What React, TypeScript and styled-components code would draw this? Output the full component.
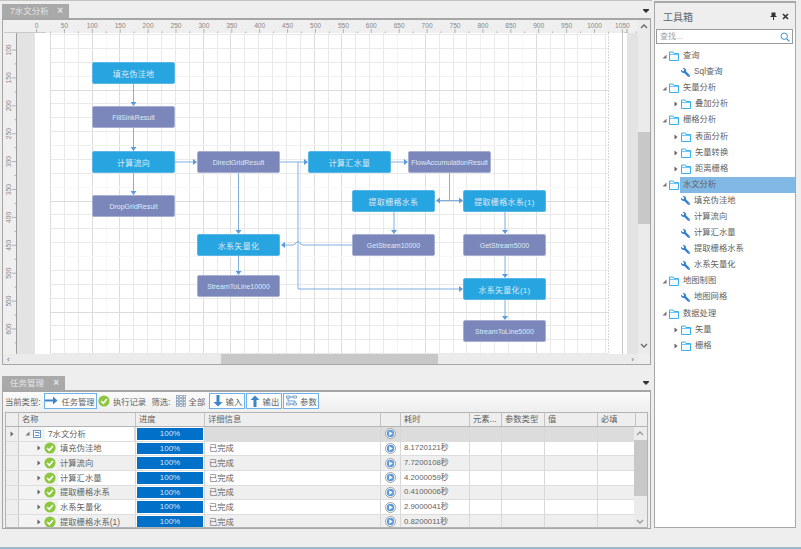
import React from "react";
import styled, { createGlobalStyle } from "styled-components";
import { FaWrench } from "react-icons/fa";

const FONT = `"Liberation Sans", "Noto Sans CJK SC", sans-serif`;

const GlobalStyle = createGlobalStyle`
  html, body { margin: 0; padding: 0; background: #eeeeee; }
  * { box-sizing: border-box; }
`;

const Page = styled.div`
  width: 801px;
  height: 549px;
  display: flex;
  flex-direction: column;
  overflow: hidden;
  background: #eeeeee;
  font-family: ${FONT};
  color: #626262;
`;

const Body = styled.div`
  flex: 1;
  display: flex;
  min-height: 0;
`;

const StatusStrip = styled.div`
  height: 2px;
  background: #9cb8cc;
`;

const LeftColumn = styled.div`
  width: 652px;
  padding-left: 2px;
  display: flex;
  flex-direction: column;
  border-top: 1px solid #c4c4c4;
`;

/* tab strips */
const TabStrip = styled.div<{ $h: number }>`
  height: ${(p) => p.$h}px;
  display: flex;
  align-items: flex-end;
  justify-content: space-between;
  padding-right: 3px;
`;

const Tab = styled.div<{ $w: number }>`
  width: ${(p) => p.$w}px;
  height: 14px;
  background: #a9a9a9;
  color: #e4e4e4;
  font-size: 8.5px;
  line-height: 14px;
  padding: 0 6px 0 8px;
  display: flex;
  justify-content: space-between;
`;

const TabClose = styled.span`
  font-size: 10px;
  font-weight: bold;
`;

const DropCaret = styled.span`
  width: 0;
  height: 0;
  margin-bottom: 5px;
  border-left: 3px solid transparent;
  border-right: 3px solid transparent;
  border-top: 3px solid #333;
  box-shadow: 0 -1px 0 #333;
`;

/* drawing panel */
const DocPanel = styled.div`
  height: 347px;
  width: 649px;
  border: 1px solid #a6a6a6;
  border-top-width: 2px;
  border-bottom-width: 1px;
  display: flex;
  background: #eeeeee;
`;

const DrawingColumn = styled.div`
  width: 635px;
  display: flex;
  flex-direction: column;
`;

const TopRuler = styled.svg`
  display: block;
  flex: none;
  background: #efefef;
`;

const CanvasRow = styled.div`
  height: 321px;
  display: flex;
`;

const SideRuler = styled.svg`
  display: block;
  flex: none;
  background: #efefef;
`;

const Gutter = styled.div<{ $w: number }>`
  width: ${(p) => p.$w}px;
  background: #e3e3e3;
`;

const Paper = styled.div`
  position: relative;
  width: 592px;
  height: 321px;
  background: #fff;
  overflow: hidden;
`;

const PaperArt = styled.svg`
  position: absolute;
  left: 0;
  top: 0;
`;

const FlowNode = styled.div<{ $x: number; $y: number; $kind: "task" | "result"; $h: number }>`
  position: absolute;
  left: ${(p) => p.$x - 35}px;
  top: ${(p) => p.$y - 33}px;
  width: 83px;
  height: ${(p) => p.$h}px;
  border-radius: 2px;
  border: 1px solid ${(p) => (p.$kind === "task" ? "#5ab6e4" : "#a8b0d2")};
  background: ${(p) => (p.$kind === "task" ? "#26a5e0" : "#7b86bb")};
  color: #dcebf6;
  font-size: ${(p) => (p.$kind === "task" ? 8 : 7)}px;
  letter-spacing: ${(p) => (p.$kind === "task" ? "0.3px" : "0")};
  display: flex;
  align-items: center;
  justify-content: center;
  white-space: nowrap;
`;

const HScroll = styled.div`
  height: 10px;
  background: #ebebeb;
  display: flex;
  align-items: center;
  justify-content: space-between;
  padding: 0 4px;
  position: relative;
  color: #666;
  font-size: 8px;
`;

const HThumb = styled.div`
  position: absolute;
  left: 218px;
  top: 0;
  width: 217px;
  height: 10px;
  background: #c8c8c8;
`;

const VScroll = styled.div`
  width: 12px;
  height: 334px;
  background: #ebebeb;
  position: relative;
`;

const VThumb = styled.div<{ $top: number; $h: number }>`
  position: absolute;
  left: 0;
  right: 0;
  top: ${(p) => p.$top}px;
  height: ${(p) => p.$h}px;
  background: #c8c8c8;
`;

const ScrollChevron = styled.svg<{ $top: number }>`
  position: absolute;
  left: 2px;
  top: ${(p) => p.$top}px;
`;

/* task panel */
const TaskPanel = styled.div`
  width: 649px;
  height: 139px;
  border: 1px solid #a6a6a6;
  border-top-width: 2px;
  background: #eeeeee;
  display: flex;
  flex-direction: column;
`;

const Toolbar = styled.div`
  height: 20px;
  flex: none;
  display: flex;
  align-items: center;
  padding: 0 0 3px 2px;
  font-size: 8.3px;
  background: linear-gradient(#fbfbfb, #eeeeee);
  white-space: nowrap;
`;

const ToolLabel = styled.span<{ $ml?: number }>`
  margin-left: ${(p) => p.$ml ?? 0}px;
`;

const ToolButton = styled.div<{ $w: number; $ml?: number; $boxed?: boolean }>`
  width: ${(p) => p.$w}px;
  height: 16px;
  margin-left: ${(p) => p.$ml ?? 0}px;
  display: flex;
  align-items: center;
  justify-content: center;
  gap: 3px;
  border: 1px solid ${(p) => (p.$boxed ? "#6fb0ea" : "transparent")};
  background: ${(p) => (p.$boxed ? "#fbfdff" : "transparent")};
`;

const Table = styled.div`
  width: 643px;
  height: 116px;
  margin-left: 2px;
  border: 1px solid #b4b4b4;
  overflow: hidden;
  position: relative;
  background: #fff;
`;

const HeadRow = styled.div`
  height: 14px;
  display: flex;
  background: #eeeeee;
  border-bottom: 1px solid #b4b4b4;
  font-size: 8.3px;
  line-height: 13px;
`;

const HeadCell = styled.div<{ $w: number }>`
  width: ${(p) => p.$w}px;
  flex: none;
  padding-left: 3px;
  border-right: 1px solid #c4c4c4;
  overflow: hidden;
  white-space: nowrap;
`;

const Row = styled.div<{ $tone: "root" | "plain" | "alt" }>`
  height: 14.67px;
  display: flex;
  font-size: 8.3px;
  line-height: 14px;
  background: ${(p) => (p.$tone === "root" ? "#dcdcdc" : p.$tone === "alt" ? "#efefef" : "#fff")};
  border-bottom: 1px solid #dddddd;
`;

const Cell = styled.div<{ $w: number }>`
  width: ${(p) => p.$w}px;
  flex: none;
  padding-left: 3px;
  border-right: 1px solid #d8d8d8;
  white-space: nowrap;
  overflow: hidden;
  display: flex;
  align-items: center;
`;

const TimeCell = styled(Cell)`
  font-size: 7.8px;
`;

const MarkerCell = styled.div`
  width: 13px;
  flex: none;
  background: #eeeeee;
  border-right: 1px solid #c8c8c8;
  display: flex;
  align-items: center;
  justify-content: center;
`;

const NameCell = styled.div<{ $root?: boolean }>`
  width: 117px;
  flex: none;
  display: flex;
  align-items: center;
  white-space: nowrap;
  border-right: 1px solid #d8d8d8;
  padding-left: ${(p) => (p.$root ? 6 : 18)}px;
  gap: 3px;
  background: linear-gradient(
    to right,
    #f3f3f3 ${(p) => (p.$root ? 26 : 39)}px,
    transparent ${(p) => (p.$root ? 26 : 39)}px
  );
`;

const NameText = styled.span`
  margin-left: 1px;
`;

const RootName = styled(NameText)`
  background: #fff;
  padding-left: 3px;
  width: 89px;
`;

const ProgressCell = styled.div`
  width: 69px;
  flex: none;
  padding: 1px;
  background: #fff;
  border-right: 1px solid #d8d8d8;
`;

const ProgressBar = styled.div`
  height: 100%;
  background: #0070c8;
  color: #cfe6f8;
  font-size: 8px;
  line-height: 12px;
  text-align: center;
`;

const DetailCell = styled(Cell)`
  padding-left: 4px;
`;

const PlayCell = styled.div`
  width: 20px;
  flex: none;
  display: flex;
  align-items: center;
  justify-content: center;
  border-right: 1px solid #d8d8d8;
`;

const TableScroll = styled.div`
  position: absolute;
  right: 0;
  top: 14px;
  bottom: 0;
  width: 13px;
  background: #ebebeb;
`;

/* toolbox panel */
const ToolboxPanel = styled.div`
  width: 142px;
  height: 527px;
  margin: 1px 0 0 2px;
  border: 1px solid #a8a8a8;
  border-width: 2px 1px 1px 1px;
  background: #fff;
  display: flex;
  flex-direction: column;
`;

const ToolboxHead = styled.div`
  height: 26px;
  background: #eeeeee;
  display: flex;
  align-items: center;
  padding: 0 6px 0 8px;
  font-size: 10px;
`;

const ToolboxTitle = styled.span`
  flex: 1;
`;

const HeadIcons = styled.div`
  display: flex;
  align-items: center;
  gap: 5px;
`;

const SearchBox = styled.div`
  height: 15px;
  margin: 0 2px 0 1px;
  border: 1px solid #9a9a9a;
  background: #fff;
  color: #a4a4a4;
  font-size: 8px;
  line-height: 12px;
  padding: 0 2px 0 3px;
  display: flex;
  align-items: center;
  justify-content: space-between;
`;

const TreeList = styled.div`
  margin-top: 4px;
`;

const TreeRow = styled.div<{ $indent: number }>`
  height: 16.1px;
  display: flex;
  align-items: center;
  padding-left: ${(p) => p.$indent}px;
  font-size: 8.3px;
  white-space: nowrap;
`;

const TreeIconSlot = styled.span`
  width: 7px;
  flex: none;
  display: flex;
  align-items: center;
  justify-content: flex-start;
`;

const TreeLabel = styled.span<{ $selected?: boolean }>`
  flex: ${(p) => (p.$selected ? 1 : "none")};
  margin-left: ${(p) => (p.$selected ? 1 : 4)}px;
  padding-left: ${(p) => (p.$selected ? 3 : 0)}px;
  height: 16px;
  line-height: 15px;
  background: ${(p) => (p.$selected ? "#82b8e4" : "transparent")};
`;

const ToolIcon = styled(FaWrench)`
  flex: none;
  width: 9px;
  height: 9px;
  color: #2f7fd8;
  transform: scaleX(-1);
`;

/* drawings */
const Collapsed = () => (
  <svg width="4" height="6" viewBox="0 0 4 6">
    <path d="M0.5 0.5 L3.5 3 L0.5 5.5 Z" fill="#666" />
  </svg>
);

const Expanded = () => (
  <svg width="5" height="5" viewBox="0 0 5 5">
    <path d="M4.5 0.5 V4.5 H0.5 Z" fill="#777" />
  </svg>
);

const FolderIcon = () => (
  <svg width="10" height="10" viewBox="0 0 10 10" style={{ flex: "none" }}>
    <path d="M0.5 9.5 V1 H4 L5 2.5 H9.5 V9.5 Z" fill="#f4fbff" stroke="#38b0f0" />
    <path d="M0.5 3.5 H9.5" stroke="#38b0f0" strokeWidth="0.7" />
  </svg>
);

const CheckIcon = () => (
  <svg width="12" height="12" viewBox="0 0 12 12" style={{ flex: "none" }}>
    <circle cx="6" cy="6" r="5.6" fill="#8dc63f" />
    <path d="M3.2 6 L5.3 8.2 L8.9 4" fill="none" stroke="#fff" strokeWidth="1.6" />
  </svg>
);

const PlayIcon = () => (
  <svg width="11" height="11" viewBox="0 0 11 11">
    <circle cx="5.5" cy="5.5" r="5" fill="#fff" stroke="#8a8a8a" strokeWidth="0.8" />
    <circle cx="5.5" cy="5.5" r="3.7" fill="#5a9ad8" />
    <path d="M4.2 3.3 L7.8 5.5 L4.2 7.7 Z" fill="#fff" />
  </svg>
);

const DocIcon = () => (
  <svg width="8" height="8" viewBox="0 0 8 8" style={{ flex: "none" }}>
    <rect x="0.5" y="0.5" width="7" height="7" fill="#fff" stroke="#6a94c4" />
    <path d="M2 5.5 H6 M2 2.5 H6 V4" stroke="#6a94c4" fill="none" />
  </svg>
);

const ArrowRight = () => (
  <svg width="13" height="9" viewBox="0 0 13 9">
    <path d="M0 3.5 H8 V0.5 L12.5 4.5 L8 8.5 V5.5 H0 Z" fill="#3d85c8" />
  </svg>
);

const ArrowVert = ({ up }: { up?: boolean }) => (
  <svg width="10" height="12" viewBox="0 0 10 12" style={{ transform: up ? "rotate(180deg)" : undefined }}>
    <path d="M3.5 0 H6.5 V7 H9.5 L5 11.5 L0.5 7 H3.5 Z" fill="#3d85c8" />
  </svg>
);

const GridGlyph = () => (
  <svg width="10" height="12" viewBox="0 0 10 12">
    {[0, 1, 2, 3].map((r) =>
      [0, 1, 2].map((c) => (
        <rect key={`${r}-${c}`} x={c * 3.5 + 0.2} y={r * 3 + 0.2} width="2.4" height="2.2" fill="#fff" stroke="#5f7f9f" strokeWidth="0.6" />
      ))
    )}
  </svg>
);

const ParamGlyph = () => (
  <svg width="11" height="12" viewBox="0 0 11 12">
    <path d="M0.5 1 H4 V3 H0.5 Z M7 1 H10.5 V3 H7 Z M0.5 8 H4 V10 H0.5 Z M7 8 H10.5 V10 H7 Z" fill="none" stroke="#6a8fb4" strokeWidth="0.8" />
    <path d="M4 2 H7 M4 9 H7 M2 3 V6 H9 V8" fill="none" stroke="#3d85c8" strokeWidth="0.8" />
  </svg>
);

const PinIcon = () => (
  <svg width="7" height="8" viewBox="0 0 7 8">
    <path d="M1.5 0.5 H5.5 V4 H6.5 V5 H4 V8 H3 V5 H0.5 V4 H1.5 Z" fill="#333" />
  </svg>
);

const CloseIcon = () => (
  <svg width="7" height="7" viewBox="0 0 7 7">
    <path d="M1 1 L6 6 M6 1 L1 6" stroke="#333" strokeWidth="1.6" />
  </svg>
);

const SearchIcon = () => (
  <svg width="10" height="10" viewBox="0 0 10 10">
    <circle cx="4.2" cy="4.2" r="3.2" fill="none" stroke="#3e8fd0" />
    <path d="M6.6 6.6 L9.4 9.4" stroke="#3e8fd0" strokeWidth="1.3" />
  </svg>
);

const Chevron = ({ up, top, color = "#666" }: { up?: boolean; top: number; color?: string }) => (
  <ScrollChevron $top={top} width="8" height="6" viewBox="0 0 8 6">
    <path d={up ? "M1 5 L4 2 L7 5" : "M1 1 L4 4 L7 1"} fill="none" stroke={color} strokeWidth="1.3" />
  </ScrollChevron>
);

/* rulers: 50 units = 27.9px */
const UNIT = 27.9;
const topMarks = Array.from({ length: 23 }, (_, i) => i * 50);
const sideMarks = [100, 150, 200, 250, 300, 350, 400, 450, 500, 550, 600];

const RulerTop = () => (
  <TopRuler width="635" height="13" viewBox="3 20 635 13">
    {topMarks.map((m, i) => {
      const x = 36.5 + i * UNIT;
      return (
        <g key={m}>
          {x < 624 && (
            <text x={x} y="28" fontSize="6.6" fill="#888" textAnchor="middle" fontFamily="Liberation Sans, sans-serif">
              {m}
            </text>
          )}
          <path d={`M${x} 29 V33`} stroke="#999" strokeWidth="0.7" />
          <path d={`M${x + UNIT / 2} 31.5 V33`} stroke="#999" strokeWidth="0.7" />
        </g>
      );
    })}
    <path d="M4 33 H46" stroke="#bdbdbd" strokeWidth="1.4" />
    <path d="M624 33 H627 V29" stroke="#888" fill="none" strokeWidth="0.7" />
  </TopRuler>
);

const RulerSide = () => (
  <SideRuler width="14" height="321" viewBox="3 33 14 321">
    <path d="M16.5 33 V354" stroke="#888" strokeWidth="0.8" />
    {sideMarks.map((m, i) => {
      const y = 50 + i * UNIT;
      return (
        <g key={m}>
          <text
            x="0"
            y="0"
            fontSize="6.6"
            fill="#888"
            textAnchor="middle"
            fontFamily="Liberation Sans, sans-serif"
            transform={`translate(11 ${y}) rotate(-90)`}
          >
            {m}
          </text>
          <path d={`M12 ${y} H16.5`} stroke="#999" strokeWidth="0.7" />
          <path d={`M14.5 ${y + UNIT / 2} H16.5`} stroke="#999" strokeWidth="0.7" />
        </g>
      );
    })}
  </SideRuler>
);

/* grid: the line weights come from the reference */
const STEP = 13.88;
const gridShade = (dark: number[], light: number[], faint: number[], i: number) =>
  dark.includes(i) ? "#dcdcdc" : faint.includes(i) ? "#f8f8f8" : light.includes(i) ? "#f1f1f1" : "#e9e9e9";

const GridLines = () => (
  <>
    {Array.from({ length: 41 }, (_, i) => {
      const x = Math.round(50 + i * STEP) + 0.5;
      return (
        <path
          key={`v${i}`}
          d={`M${x} 33 V354`}
          stroke={gridShade([3, 5, 11, 13, 19, 21, 27, 35], [25, 31, 39], [4, 26, 34], i)}
        />
      );
    })}
    {Array.from({ length: 24 }, (_, k) => {
      const y = Math.round(34 + k * STEP) + 0.5;
      return (
        <path
          key={`h${k}`}
          d={`M50 ${y} H608`}
          stroke={gridShade([4, 12, 20], [3, 8], [11, 16], k)}
        />
      );
    })}
    <path d="M50.5 33 V354 M608.5 33 V354" stroke="#d8d8d8" strokeDasharray="2 1" />
    <path d="M622.5 33 V354" stroke="#c8c8c8" />
  </>
);

const LINE = "#7fb0e0";

const links = [
  "M133.5 84 V104",
  "M133.5 128 V149",
  "M133.5 173 V193",
  "M175 162 H195",
  "M280 162 H306",
  "M391 162 H406",
  "M238.5 173 V232",
  "M238.5 256 V273",
  "M298 162 V289 H461",
  "M449.5 173 V200.5",
  "M438 200.5 H461",
  "M394 212 V232",
  "M505 212 V232",
  "M505 256 V276",
  "M505 300 V318",
  "M352 245 H303 Q300.5 245 300.5 243 Q298 240 295.5 243 Q295.5 245 293 245 H283",
];

const heads = [
  "M133.5 106 L130.5 102 H136.5 Z",
  "M133.5 151 L130.5 147 H136.5 Z",
  "M133.5 195 L130.5 191 H136.5 Z",
  "M197 162 L193 159 V165 Z",
  "M308 162 L304 159 V165 Z",
  "M408 162 L404 159 V165 Z",
  "M238.5 234 L235.5 230 H241.5 Z",
  "M238.5 275 L235.5 271 H241.5 Z",
  "M463 289 L459 286 V292 Z",
  "M463 200.5 L459 197.5 V203.5 Z",
  "M436 200.5 L440 197.5 V203.5 Z",
  "M394 234 L391 230 H397 Z",
  "M505 234 L502 230 H508 Z",
  "M505 278 L502 274 H508 Z",
  "M505 320 L502 316 H508 Z",
  "M281 245 L285 242 V248 Z",
];

type Node = { x: number; y: number; kind: "task" | "result"; text: string };

const nodes: Node[] = [
  { x: 92, y: 62, kind: "task", text: "填充伪洼地" },
  { x: 92, y: 106, kind: "result", text: "FillSinkResult" },
  { x: 92, y: 151, kind: "task", text: "计算流向" },
  { x: 92, y: 195, kind: "result", text: "DropGridResult" },
  { x: 197, y: 151, kind: "result", text: "DirectGridResult" },
  { x: 308, y: 151, kind: "task", text: "计算汇水量" },
  { x: 408, y: 151, kind: "result", text: "FlowAccumulationResult" },
  { x: 352, y: 190, kind: "task", text: "提取栅格水系" },
  { x: 463, y: 190, kind: "task", text: "提取栅格水系(1)" },
  { x: 197, y: 234, kind: "task", text: "水系矢量化" },
  { x: 352, y: 234, kind: "result", text: "GetStream10000" },
  { x: 463, y: 234, kind: "result", text: "GetStream5000" },
  { x: 197, y: 275, kind: "result", text: "StreamToLine10000" },
  { x: 463, y: 278, kind: "task", text: "水系矢量化(1)" },
  { x: 463, y: 320, kind: "result", text: "StreamToLine5000" },
];

/* table data */
const extraCols = [
  { w: 69, label: "耗时" },
  { w: 32, label: "元素..." },
  { w: 43, label: "参数类型" },
  { w: 53, label: "值" },
  { w: 38, label: "必填" },
];

const tasks = [
  { name: "填充伪洼地", time: "8.1720121秒" },
  { name: "计算流向", time: "7.7200108秒" },
  { name: "计算汇水量", time: "4.2000059秒" },
  { name: "提取栅格水系", time: "0.4100006秒" },
  { name: "水系矢量化", time: "2.9000041秒" },
  { name: "提取栅格水系(1)", time: "0.8200011秒" },
];

const TailCells = ({ time }: { time?: string }) => (
  <>
    <PlayCell>
      <PlayIcon />
    </PlayCell>
    <TimeCell $w={69}>{time}</TimeCell>
    <Cell $w={32} />
    <Cell $w={43} />
    <Cell $w={53} />
    <Cell $w={38} />
  </>
);

/* tree data */
type TreeItem = { level: 0 | 1; type: "group" | "tool"; text: string; selected?: boolean };

const tree: TreeItem[] = [
  { level: 0, type: "group", text: "查询" },
  { level: 1, type: "tool", text: "Sql查询" },
  { level: 0, type: "group", text: "矢量分析" },
  { level: 1, type: "group", text: "叠加分析" },
  { level: 0, type: "group", text: "栅格分析" },
  { level: 1, type: "group", text: "表面分析" },
  { level: 1, type: "group", text: "矢量转换" },
  { level: 1, type: "group", text: "距离栅格" },
  { level: 0, type: "group", text: "水文分析", selected: true },
  { level: 1, type: "tool", text: "填充伪洼地" },
  { level: 1, type: "tool", text: "计算流向" },
  { level: 1, type: "tool", text: "计算汇水量" },
  { level: 1, type: "tool", text: "提取栅格水系" },
  { level: 1, type: "tool", text: "水系矢量化" },
  { level: 0, type: "group", text: "地图制图" },
  { level: 1, type: "tool", text: "地图网格" },
  { level: 0, type: "group", text: "数据处理" },
  { level: 1, type: "group", text: "矢量" },
  { level: 1, type: "group", text: "栅格" },
];

function App() {
  return (
    <Page>
      <GlobalStyle />
      <Body>
        <LeftColumn>
          <TabStrip $h={17}>
            <Tab $w={67}>
              <span>7水文分析</span>
              <TabClose>×</TabClose>
            </Tab>
            <DropCaret />
          </TabStrip>
          <DocPanel>
            <DrawingColumn>
              <RulerTop />
              <CanvasRow>
                <RulerSide />
                <Gutter $w={18} />
                <Paper>
                  <PaperArt width="592" height="321" viewBox="35 33 592 321">
                    <GridLines />
                    {links.map((d) => (
                      <path key={d} d={d} fill="none" stroke={LINE} strokeWidth="1" />
                    ))}
                    {heads.map((d) => (
                      <path key={d} d={d} fill="#5d9bdc" />
                    ))}
                  </PaperArt>
                  {nodes.map((n) => (
                    <FlowNode key={n.text} $x={n.x} $y={n.y} $h={22} $kind={n.kind}>
                      {n.text}
                    </FlowNode>
                  ))}
                </Paper>
                <Gutter $w={11} />
              </CanvasRow>
              <HScroll>
                <HThumb />
                <span>‹</span>
                <span>›</span>
              </HScroll>
            </DrawingColumn>
            <VScroll>
              <Chevron up top={3} />
              <VThumb $top={112} $h={92} />
              <Chevron top={323} />
            </VScroll>
          </DocPanel>
          <TabStrip $h={25}>
            <Tab $w={63}>
              <span>任务管理</span>
              <TabClose>×</TabClose>
            </Tab>
            <DropCaret />
          </TabStrip>
          <TaskPanel>
            <Toolbar>
              <ToolLabel>当前类型:</ToolLabel>
              <ToolButton $w={53} $ml={3} $boxed>
                <ArrowRight />
                任务管理
              </ToolButton>
              <ToolButton $w={47} $ml={2}>
                <CheckIcon />
                执行记录
              </ToolButton>
              <ToolLabel $ml={6}>筛选:</ToolLabel>
              <ToolButton $w={34} $ml={3}>
                <GridGlyph />
                全部
              </ToolButton>
              <ToolButton $w={36} $ml={2} $boxed>
                <ArrowVert />
                输入
              </ToolButton>
              <ToolButton $w={36} $ml={1} $boxed>
                <ArrowVert up />
                输出
              </ToolButton>
              <ToolButton $w={36} $ml={1} $boxed>
                <ParamGlyph />
                参数
              </ToolButton>
            </Toolbar>
            <Table>
              <HeadRow>
                <HeadCell $w={13} />
                <HeadCell $w={117}>名称</HeadCell>
                <HeadCell $w={69}>进度</HeadCell>
                <HeadCell $w={176}>详细信息</HeadCell>
                <HeadCell $w={20} />
                {extraCols.map((c) => (
                  <HeadCell key={c.label} $w={c.w}>
                    {c.label}
                  </HeadCell>
                ))}
              </HeadRow>
              <Row $tone="root">
                <MarkerCell>
                  <Collapsed />
                </MarkerCell>
                <NameCell $root>
                  <Expanded />
                  <DocIcon />
                  <RootName>7水文分析</RootName>
                </NameCell>
                <ProgressCell>
                  <ProgressBar>100%</ProgressBar>
                </ProgressCell>
                <DetailCell $w={176} />
                <TailCells />
              </Row>
              {tasks.map((t, i) => (
                <Row key={t.name} $tone={i % 2 === 0 ? "plain" : "alt"}>
                  <MarkerCell />
                  <NameCell>
                    <Collapsed />
                    <CheckIcon />
                    <NameText>{t.name}</NameText>
                  </NameCell>
                  <ProgressCell>
                    <ProgressBar>100%</ProgressBar>
                  </ProgressCell>
                  <DetailCell $w={176}>已完成</DetailCell>
                  <TailCells time={t.time} />
                </Row>
              ))}
              <TableScroll>
                <Chevron up top={3} color="#999" />
                <VThumb $top={13} $h={56} />
                <Chevron top={92} color="#999" />
              </TableScroll>
            </Table>
          </TaskPanel>
        </LeftColumn>
        <ToolboxPanel>
          <ToolboxHead>
            <ToolboxTitle>工具箱</ToolboxTitle>
            <HeadIcons>
              <PinIcon />
              <CloseIcon />
            </HeadIcons>
          </ToolboxHead>
          <SearchBox>
            <span>查找...</span>
            <SearchIcon />
          </SearchBox>
          <TreeList>
            {tree.map((item) => (
              <TreeRow key={item.level + item.text} $indent={item.level === 0 ? 7 : 19}>
                <TreeIconSlot>{item.type === "group" && (item.level === 0 ? <Expanded /> : <Collapsed />)}</TreeIconSlot>
                {item.type === "group" ? <FolderIcon /> : <ToolIcon />}
                <TreeLabel $selected={item.selected}>{item.text}</TreeLabel>
              </TreeRow>
            ))}
          </TreeList>
        </ToolboxPanel>
      </Body>
      <StatusStrip />
    </Page>
  );
}

export default App;
